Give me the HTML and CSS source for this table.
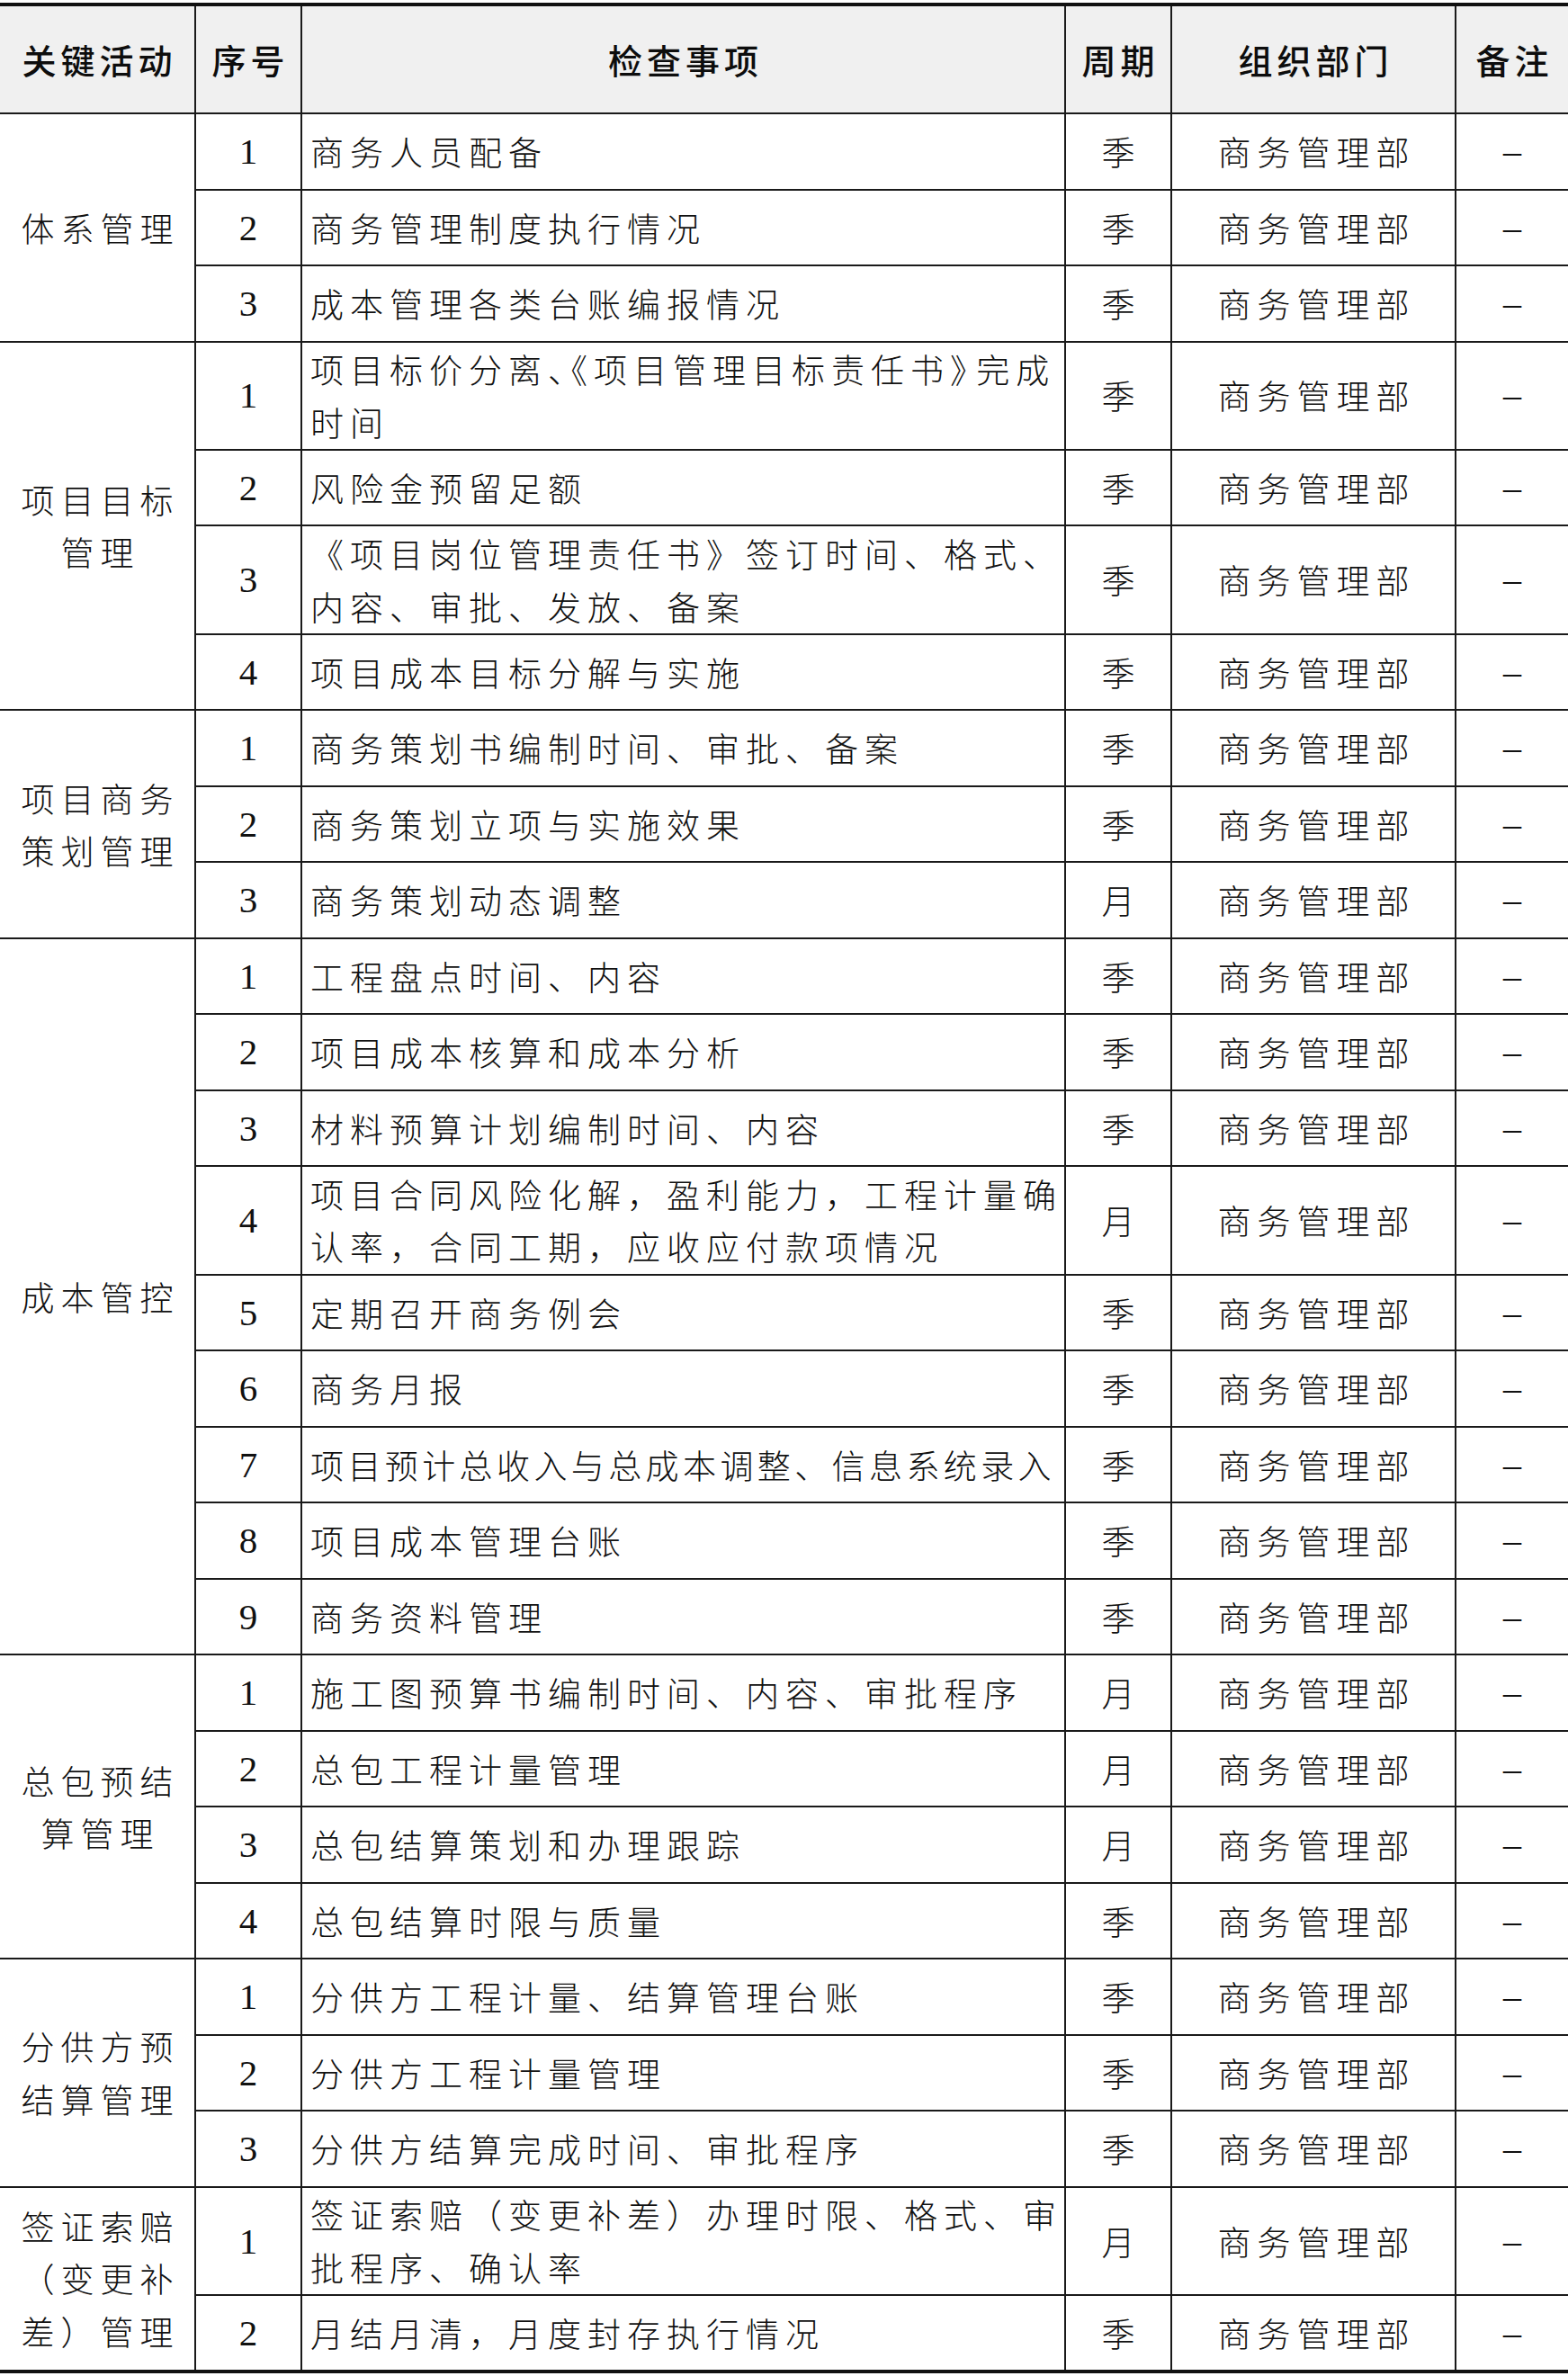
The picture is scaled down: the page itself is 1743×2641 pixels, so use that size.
FILE: index.html
```html
<!DOCTYPE html>
<html lang="zh-CN">
<head>
<meta charset="utf-8">
<title>商务管理检查事项</title>
<link rel="stylesheet" href="styles.css">
</head>
<body>
<table class="sheet">
  <colgroup>
    <col class="c-act"><col class="c-no"><col class="c-item"><col class="c-cyc"><col class="c-dept"><col class="c-note">
  </colgroup>
  <thead>
    <tr class="head">
      <th>关键活动</th><th>序号</th><th>检查事项</th><th>周期</th><th>组织部门</th><th>备注</th>
    </tr>
  </thead>
  <tbody>
    <tr class="s"><td class="act" rowspan="3">体系管理</td><td class="no">1</td><td class="item">商务人员配备</td><td class="cyc">季</td><td class="dept">商务管理部</td><td class="note">–</td></tr>
    <tr class="s"><td class="no">2</td><td class="item">商务管理制度执行情况</td><td class="cyc">季</td><td class="dept">商务管理部</td><td class="note">–</td></tr>
    <tr class="s grp-end"><td class="no">3</td><td class="item">成本管理各类台账编报情况</td><td class="cyc">季</td><td class="dept">商务管理部</td><td class="note">–</td></tr>

    <tr class="d"><td class="act" rowspan="4">项目目标管理</td><td class="no">1</td><td class="item">项目标价分离<span class="cmp">、</span>《项目管理目标责任书<span class="cmp2">》</span>完成<br>时间</td><td class="cyc">季</td><td class="dept">商务管理部</td><td class="note">–</td></tr>
    <tr class="s"><td class="no">2</td><td class="item">风险金预留足额</td><td class="cyc">季</td><td class="dept">商务管理部</td><td class="note">–</td></tr>
    <tr class="d"><td class="no">3</td><td class="item">《项目岗位管理责任书》签订时间、格式、<br>内容、审批、发放、备案</td><td class="cyc">季</td><td class="dept">商务管理部</td><td class="note">–</td></tr>
    <tr class="s grp-end"><td class="no">4</td><td class="item">项目成本目标分解与实施</td><td class="cyc">季</td><td class="dept">商务管理部</td><td class="note">–</td></tr>

    <tr class="s"><td class="act" rowspan="3">项目商务策划管理</td><td class="no">1</td><td class="item">商务策划书编制时间、审批、备案</td><td class="cyc">季</td><td class="dept">商务管理部</td><td class="note">–</td></tr>
    <tr class="s"><td class="no">2</td><td class="item">商务策划立项与实施效果</td><td class="cyc">季</td><td class="dept">商务管理部</td><td class="note">–</td></tr>
    <tr class="s grp-end"><td class="no">3</td><td class="item">商务策划动态调整</td><td class="cyc">月</td><td class="dept">商务管理部</td><td class="note">–</td></tr>

    <tr class="s"><td class="act" rowspan="9">成本管控</td><td class="no">1</td><td class="item">工程盘点时间、内容</td><td class="cyc">季</td><td class="dept">商务管理部</td><td class="note">–</td></tr>
    <tr class="s"><td class="no">2</td><td class="item">项目成本核算和成本分析</td><td class="cyc">季</td><td class="dept">商务管理部</td><td class="note">–</td></tr>
    <tr class="s"><td class="no">3</td><td class="item">材料预算计划编制时间、内容</td><td class="cyc">季</td><td class="dept">商务管理部</td><td class="note">–</td></tr>
    <tr class="d"><td class="no">4</td><td class="item">项目合同风险化解，盈利能力，工程计量确<br>认率，合同工期，应收应付款项情况</td><td class="cyc">月</td><td class="dept">商务管理部</td><td class="note">–</td></tr>
    <tr class="s"><td class="no">5</td><td class="item">定期召开商务例会</td><td class="cyc">季</td><td class="dept">商务管理部</td><td class="note">–</td></tr>
    <tr class="s"><td class="no">6</td><td class="item">商务月报</td><td class="cyc">季</td><td class="dept">商务管理部</td><td class="note">–</td></tr>
    <tr class="s"><td class="no">7</td><td class="item tight">项目预计总收入与总成本调整、信息系统录入</td><td class="cyc">季</td><td class="dept">商务管理部</td><td class="note">–</td></tr>
    <tr class="s"><td class="no">8</td><td class="item">项目成本管理台账</td><td class="cyc">季</td><td class="dept">商务管理部</td><td class="note">–</td></tr>
    <tr class="s grp-end"><td class="no">9</td><td class="item">商务资料管理</td><td class="cyc">季</td><td class="dept">商务管理部</td><td class="note">–</td></tr>

    <tr class="s"><td class="act" rowspan="4">总包预结算管理</td><td class="no">1</td><td class="item">施工图预算书编制时间、内容、审批程序</td><td class="cyc">月</td><td class="dept">商务管理部</td><td class="note">–</td></tr>
    <tr class="s"><td class="no">2</td><td class="item">总包工程计量管理</td><td class="cyc">月</td><td class="dept">商务管理部</td><td class="note">–</td></tr>
    <tr class="s"><td class="no">3</td><td class="item">总包结算策划和办理跟踪</td><td class="cyc">月</td><td class="dept">商务管理部</td><td class="note">–</td></tr>
    <tr class="s grp-end"><td class="no">4</td><td class="item">总包结算时限与质量</td><td class="cyc">季</td><td class="dept">商务管理部</td><td class="note">–</td></tr>

    <tr class="s"><td class="act" rowspan="3">分供方预结算管理</td><td class="no">1</td><td class="item">分供方工程计量、结算管理台账</td><td class="cyc">季</td><td class="dept">商务管理部</td><td class="note">–</td></tr>
    <tr class="s"><td class="no">2</td><td class="item">分供方工程计量管理</td><td class="cyc">季</td><td class="dept">商务管理部</td><td class="note">–</td></tr>
    <tr class="s grp-end"><td class="no">3</td><td class="item">分供方结算完成时间、审批程序</td><td class="cyc">季</td><td class="dept">商务管理部</td><td class="note">–</td></tr>

    <tr class="d"><td class="act" rowspan="2">签证索赔（变更补差）管理</td><td class="no">1</td><td class="item">签证索赔（变更补差）办理时限、格式、审<br>批程序、确认率</td><td class="cyc">月</td><td class="dept">商务管理部</td><td class="note">–</td></tr>
    <tr class="s last"><td class="no">2</td><td class="item">月结月清，月度封存执行情况</td><td class="cyc">季</td><td class="dept">商务管理部</td><td class="note">–</td></tr>
  </tbody>
</table>
</body>
</html>
```

FILE: styles.css
```css
html, body {
  margin: 0;
  padding: 0;
  background: #ffffff;
}

body {
  padding-top: 3px;
  font-family: "Noto Sans CJK SC", "Noto Sans", sans-serif;
  color: #111111;
}

.sheet {
  width: 1743px;
  border-collapse: collapse;
  table-layout: fixed;
  border-top: 4px solid #111111;
  border-bottom: 4px solid #111111;
}

.c-act { width: 217px; }
.c-no { width: 118px; }
.c-item { width: 849px; }
.c-cyc { width: 118px; }
.c-dept { width: 316px; }
.c-note { width: 125px; }

.sheet th,
.sheet td {
  border: 2px solid #1a1a1a;
  padding: 0;
  vertical-align: middle;
  text-align: center;
}

.sheet tr > :first-child { border-left: none; }
.sheet tr > :last-child { border-right: none; }
.sheet td.act { border-left: none; }

.head th {
  height: 118px;
  background: #f0f0f0;
  font-weight: 500;
  font-size: 38px;
  letter-spacing: 5px;
  padding-left: 5px;
  line-height: 58px;
  border-top: none;
  color: #0d0d0d;
}

.s { height: 84.5px; }
.d { height: 120.4px; }

.sheet td {
  font-size: 37px;
  font-weight: 300;
  line-height: 58.5px;
  letter-spacing: 7px;
}

.act {
  padding: 0 8px 0 15px !important;
  text-align: center;
}

.no {
  font-family: "Liberation Serif", "Times New Roman", serif;
  font-weight: 400 !important;
  font-size: 41px !important;
  letter-spacing: 0 !important;
}

.item {
  text-align: left !important;
  padding: 0 2px 0 9px !important;
  white-space: nowrap;
}

.item.tight { letter-spacing: 4.4px; }

.cmp { letter-spacing: calc(7px - 0.5em); }
.cmp2 { letter-spacing: calc(7px - 0.4em); }

.cyc { padding-left: 7px !important; }
.dept { padding-left: 7px !important; }

.note {
  font-family: "Liberation Serif", "Times New Roman", serif;
  font-weight: 400 !important;
  font-size: 40px !important;
  letter-spacing: 0 !important;
}

.last td { border-bottom: none; }
```
